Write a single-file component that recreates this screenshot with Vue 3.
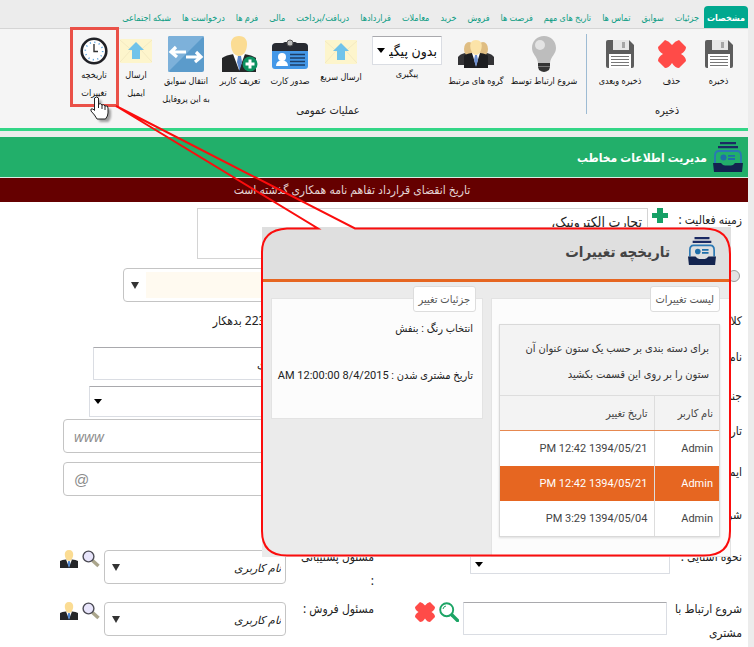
<script setup>
import { ref } from 'vue'

const tabs = ['مشخصات', 'جزئیات', 'سوابق', 'تماس ها', 'تاریخ های مهم', 'فرصت ها', 'فروش', 'خرید', 'معاملات', 'قراردادها', 'دریافت/پرداخت', 'مالی', 'فرم ها', 'درخواست ها', 'شبکه اجتماعی']
const active = ref('مشخصات')

const saveTools = [
  { icon: 'disk', label: 'ذخیره', size: 'w47' },
  { icon: 'cross', label: 'حذف', size: 'w47' },
  { icon: 'disk', label: 'ذخیره وبعدی', size: 'w56' }
]
const startTools = [
  { icon: 'bulb', label: 'شروع ارتباط توسط', size: 'w76' },
  { icon: 'people', label: 'گروه های مرتبط', size: 'w60' }
]
const moreTools = [
  { icon: 'mail', label: 'ارسال سریع', size: 'w54', short: true },
  { icon: 'card', label: 'صدور کارت', size: 'w48' },
  { icon: 'useradd', label: 'تعریف کاربر', size: 'w52' },
  { icon: 'transfer', label: 'انتقال سوابق\nبه این پروفایل', size: 'w56' },
  { icon: 'mail', label: 'ارسال\nایمیل', size: 'w44', short: true },
  { icon: 'clock', label: 'تاریخچه\nتغییرات', size: 'w40', short: true }
]

const activity = ref('تجارت الکترونیک،')
const firstName = ref('علوی')
const changes = [
  { user: 'Admin', date: '1394/05/21 12:42 PM' },
  { user: 'Admin', date: '1394/05/21 12:42 PM' },
  { user: 'Admin', date: '1394/05/04 3:29 PM' }
]
const selected = ref(1)
</script>

<template>
  <div class="page" dir="rtl">
    <svg class="defs" aria-hidden="true">
      <symbol id="disk" viewBox="0 0 28 28">
        <path d="M0 2Q0 0 2 0H23L28 5V26Q28 28 26 28H2Q0 28 0 26Z" fill="#5d5d5d" />
        <rect x="7" y="0" width="16" height="10" fill="#e6e6e6" /><rect x="16" y="2" width="3" height="6" fill="#a5a5a5" />
        <rect x="3" y="14" width="22" height="14" fill="#fff" />
        <path d="M5 16.500H23M5 19.500H23M5 22.500H23M5 25.500H23" stroke="#777" stroke-width="1.200" />
      </symbol>
      <symbol id="cross" viewBox="0 0 28 28">
        <path d="M0 7L7 0Q11 1 14 5Q17 1 21 0L28 7Q28 11 23 14Q28 17 28 21L21 28Q17 28 14 23Q11 28 7 28L0 21Q0 17 5 14Q0 11 0 7Z" fill="#ff4b48" />
      </symbol>
      <symbol id="bulb" viewBox="0 0 24 36">
        <path d="M12 0C5 0 0 5 0 12C0 18 5 20 6 27H18C19 20 24 18 24 12C24 5 19 0 12 0Z" fill="#bdbdbd" />
        <circle cx="8" cy="9" r="5" fill="#e3e3e3" />
        <path d="M6 27H18V31L17 34Q14 36 12 36Q10 36 7 34L6 31Z" fill="#333" /><path d="M6 30.500H18" stroke="#777" />
      </symbol>
      <symbol id="man" viewBox="0 0 18 18">
        <path d="M0 18V11Q2 9.500 6 9.500H12Q16 9.500 18 11V18Z" fill="#252628" />
        <path d="M6 9.500L9 17L12 9.500Z" fill="#fff" /><path d="M8.200 11H9.800L10.300 14L9 18L7.700 14Z" fill="#4f86cf" />
        <path d="M9 0C6 0 4.500 2 4.800 5C5 8 7 11 9 11C11 11 13 8 13.200 5C13.500 2 12 0 9 0Z" fill="#fbdc93" />
      </symbol>
      <symbol id="people" viewBox="0 0 36 28">
        <path d="M0 25V17Q2 14 7 13H29Q34 14 36 17V25Z" fill="#333336" />
        <ellipse cx="11" cy="9" rx="5" ry="7" fill="#dfbd82" /><ellipse cx="25" cy="9" rx="5" ry="7" fill="#dfbd82" />
        <path d="M6 28V16Q7 14 14 13H22Q29 14 30 16V28Z" fill="#1d1e21" />
        <path d="M14 13L18 26L22 13Z" fill="#fff" /><path d="M17 15H19L20 20L18 27L16 20Z" fill="#6d8fd0" />
        <path d="M18 0C13.500 0 12 3 12.300 7C12.800 12 15.500 15 18 15C20.500 15 23.200 12 23.700 7C24 3 22.500 0 18 0Z" fill="#fbe3a8" />
      </symbol>
      <symbol id="mail" viewBox="0 0 32 24">
        <rect width="32" height="24" rx="1" fill="#fdf5cc" /><path d="M0 1L16 15L32 1M0 23L11 11M32 23L21 11" fill="none" stroke="#f3e9c0" />
        <path d="M16 3L24 11H20V20H12V11H8Z" fill="#70c3ea" />
      </symbol>
      <symbol id="card" viewBox="0 0 36 30">
        <rect y="5" width="36" height="25" rx="3" fill="#4498e8" /><path d="M0 12V8Q0 4 4 4H32Q36 4 36 8V12Z" fill="#282a31" />
        <rect x="11" y="3" width="14" height="4" rx="2" fill="#282a31" /><circle cx="18" cy="4" r="3" fill="#bbb" stroke="#555" />
        <circle cx="10" cy="18" r="4" fill="#fff" /><path d="M4 27Q4 22 10 21Q16 22 16 27Z" fill="#fff" />
        <path d="M18 15.500H33M18 19H33M18 22.500H33M18 26H33" stroke="#1d3d66" stroke-width="1.400" />
      </symbol>
      <symbol id="useradd" viewBox="0 0 36 36">
        <path d="M0 36V22Q4 19 12 18H22Q30 19 34 22V36Z" fill="#252628" />
        <path d="M11 18L17 34L23 18Z" fill="#fff" /><path d="M16 20H19L20 26L17.500 35L15 26Z" fill="#5b86cb" />
        <path d="M17 0C11 0 8.500 4 9 9C9.500 16 13 20 17 20C21 20 24.500 16 25 9C25.500 4 23 0 17 0Z" fill="#fbdc93" />
        <circle cx="28" cy="28" r="7.500" fill="#0b9160" /><path d="M28 23.500V32.500M23.500 28H32.500" stroke="#fff" stroke-width="3" />
      </symbol>
      <symbol id="transfer" viewBox="0 0 36 36">
        <rect width="36" height="36" rx="2" fill="#5b9bcb" /><path d="M0 2Q0 0 2 0H36L0 36Z" fill="#7db1da" />
        <path d="M8 11L3 16L9 21M3.500 16H18M28 16L33 21L27 26M33 21H18" fill="none" stroke="#fff" stroke-width="3.200" />
      </symbol>
      <symbol id="clock" viewBox="0 0 28 28">
        <circle cx="14" cy="14" r="12.300" fill="#fff" stroke="#202126" stroke-width="2.600" />
        <circle cx="14" cy="14" r="8.700" fill="none" stroke="#5ea5e0" stroke-width="1.600" stroke-dasharray="1.200 3.355" />
        <path d="M14 7V14.500H18" fill="none" stroke="#333" stroke-width="1.400" />
      </symbol>
      <symbol id="files" viewBox="0 0 30 30">
        <path d="M7 1.200H23M5 5.200H25" stroke="#1b2a63" stroke-width="2.200" />
        <path d="M2 21V14Q2 9 6 9H24Q28 9 28 14V21" fill="none" stroke="#2a78b4" stroke-width="1.800" />
        <circle cx="10.500" cy="15.500" r="3" fill="#1f6fa9" /><path d="M15 13.800H22M15 17H22" stroke="#1f6fa9" stroke-width="1.800" />
        <path d="M0 21H8Q10 23.500 12 23.500H18Q20 23.500 22 21H30L29 30H1Z" fill="#13244f" />
      </symbol>
      <symbol id="plus" viewBox="0 0 16 16"><path d="M5 0H11V5H16V10H11V15H5V10H0V5H5Z" fill="#16a066" /></symbol>
      <symbol id="lens" viewBox="0 0 18 18">
        <path d="M10.500 10.500L16.500 16" stroke="#aaa58c" stroke-width="3.500" /><circle cx="6.500" cy="6.500" r="5.400" fill="#e8e5fb" stroke="#4c4b55" stroke-width="1.400" />
      </symbol>
      <symbol id="search" viewBox="0 0 20 20">
        <path d="M13 13L18.500 18.500" stroke="#1ca465" stroke-width="3.400" stroke-linecap="round" />
        <circle cx="7.700" cy="7.700" r="6.500" fill="#fff" stroke="#1ca465" stroke-width="1.900" /><path d="M4 7Q4.500 4.300 7 4" fill="none" stroke="#1ca465" />
      </symbol>
    </svg>

    <nav class="tabs">
      <a v-for="t in tabs" :key="t" href="#" :class="{ on: t === active }" @click.prevent="active = t">{{ t }}</a>
    </nav>

    <header class="ribbon">
      <section class="group">
        <div class="tools">
          <button v-for="t in saveTools" :key="t.label" type="button" class="tool" :class="t.size">
            <span class="pic"><svg :class="t.icon"><use :href="'#' + t.icon" /></svg></span><span>{{ t.label }}</span>
          </button>
        </div>
        <h2>ذخیره</h2>
      </section>
      <section class="group main">
        <div class="tools">
          <button v-for="t in startTools" :key="t.label" type="button" class="tool" :class="t.size">
            <span class="pic"><svg :class="t.icon"><use :href="'#' + t.icon" /></svg></span><span>{{ t.label }}</span>
          </button>
          <div class="tool follow">
            <span class="pick"><select id="follow"><option>بدون پیگیری</option></select></span>
            <label for="follow">پیگیری</label>
          </div>
          <button v-for="t in moreTools" :key="t.label" type="button" class="tool" :class="[t.size, { short: t.short }]">
            <span class="pic"><svg :class="t.icon"><use :href="'#' + t.icon" /></svg></span><span>{{ t.label }}</span>
          </button>
        </div>
        <h2>عملیات عمومی</h2>
      </section>
    </header>

    <main>
      <div class="title"><svg class="files"><use href="#files" /></svg><h1>مدیریت اطلاعات مخاطب</h1></div>
      <p class="alert">تاریخ انقضای قرارداد تفاهم نامه همکاری گذشته است</p>

      <form class="form" @submit.prevent>
        <div class="row activity">
          <label for="activity">زمینه فعالیت :</label>
          <button type="button" class="ico" aria-label="افزودن"><svg class="plus"><use href="#plus" /></svg></button>
          <textarea id="activity" v-model="activity"></textarea>
        </div>

        <div class="row"><input type="radio" class="radio" aria-label="نوع"></div>
        <div class="row left">
          <span class="combo cream"><input aria-label="گروه"><button type="button" aria-label="باز کردن"></button></span>
        </div>

        <div class="row"><span class="lab">کلاس</span></div>
        <div class="row left"><span class="lab">223000 بدهکار</span></div>

        <div class="row"><span class="lab">نام</span></div>
        <div class="row left"><input v-model="firstName" class="box name" aria-label="نام"></div>

        <div class="row"><span class="lab">جنسیت</span></div>
        <div class="row left"><span class="pick wide"><select aria-label="جنسیت"><option></option></select></span></div>

        <div class="row"><span class="lab">تاریخ</span></div>
        <div class="row left"><input class="soft web" dir="ltr" placeholder="www" aria-label="وب"></div>

        <div class="row"><span class="lab">ایمیل</span></div>
        <div class="row left"><input class="soft" dir="ltr" placeholder="@" aria-label="ایمیل"></div>

        <div class="row"><span class="lab">شرکت</span></div>
        <div class="row left"></div>

        <div class="row">
          <label class="lab cap" for="how">نحوه آشنایی :</label>
          <span class="pick how"><select id="how"><option></option></select></span>
        </div>
        <div class="row left named">
          <label class="lab cap" for="support">{{ 'مسئول پشتیبانی\n:' }}</label>
          <span class="combo user"><input id="support" placeholder="نام کاربری"><button type="button" aria-label="باز کردن"></button></span>
          <button type="button" class="ico" aria-label="جستجو"><svg class="s18"><use href="#lens" /></svg></button>
          <button type="button" class="ico" aria-label="کاربر"><svg class="s18"><use href="#man" /></svg></button>
        </div>

        <div class="row">
          <label class="lab cap" for="start">{{ 'شروع ارتباط با\nمشتری' }}</label>
          <input id="start" class="box start">
          <button type="button" class="ico" aria-label="جستجو"><svg class="s20"><use href="#search" /></svg></button>
          <button type="button" class="ico" aria-label="حذف"><svg class="s20"><use href="#cross" /></svg></button>
        </div>
        <div class="row left named">
          <label class="lab cap" for="sales">مسئول فروش :</label>
          <span class="combo user"><input id="sales" placeholder="نام کاربری"><button type="button" aria-label="باز کردن"></button></span>
          <button type="button" class="ico" aria-label="جستجو"><svg class="s18"><use href="#lens" /></svg></button>
          <button type="button" class="ico" aria-label="کاربر"><svg class="s18"><use href="#man" /></svg></button>
        </div>
      </form>
    </main>

    <aside class="popup">
      <div class="pop-title"><svg class="files"><use href="#files" /></svg><h2>تاریخچه تغییرات</h2></div>
      <div class="pop-body">
        <section class="card list">
          <h3>لیست تغییرات</h3>
          <div class="grid">
            <p>برای دسته بندی بر حسب یک ستون عنوان آن ستون را بر روی این قسمت بکشید</p>
            <table>
              <thead><tr><th>نام کاربر</th><th>تاریخ تغییر</th></tr></thead>
              <tbody>
                <tr v-for="(c, i) in changes" :key="i" :class="{ sel: i === selected }" @click="selected = i">
                  <td>{{ c.user }}</td><td>{{ c.date }}</td>
                </tr>
              </tbody>
            </table>
          </div>
        </section>
        <section class="card detail">
          <h3>جزئیات تغییر</h3>
          <p>انتخاب رنگ : بنفش</p>
          <p>تاریخ مشتری شدن : 8/4/2015 12:00:00 AM</p>
        </section>
      </div>
    </aside>

    <svg class="callout" viewBox="0 0 754 647" aria-hidden="true">
      <rect x="71.500" y="28.500" width="46" height="77" fill="none" stroke="#ea5148" stroke-width="3" />
      <path d="M116 106L318 228.500H287Q262 230 262 252V531Q262 555.500 287 555.500H704Q730 555.500 730 531V254Q730 228.500 704 228.500H355Z" fill="none" stroke="#fb0d0d" stroke-width="2" />
      <path class="shade" d="M94.500 98Q96.500 96 98.500 98V104Q101 103 102 105Q104 104 105 106Q108 105 108 108V113Q108 116 105.500 119H97Q95 115 91 111Q90 108 93 109L94.500 110.500Z" />
      <path d="M94.500 98Q96.500 96 98.500 98V104Q101 103 102 105Q104 104 105 106Q108 105 108 108V113Q108 116 105.500 119H97Q95 115 91 111Q90 108 93 109L94.500 110.500Z" fill="#fff" stroke="#222" />
      <path d="M98.500 104V108M102 105V109M105 106V110" stroke="#222" />
    </svg>
  </div>
</template>

<style>
body { margin: 0; background: #ececec; }
</style>

<style scoped>
.page { position: relative; min-height: 100vh; padding-right: 6px; background: #ececec; overflow: hidden; font-family: "Noto Sans", "DejaVu Sans Condensed", "DejaVu Sans", sans-serif; font-size: 12px; color: #222; }
.page, .page * { box-sizing: border-box; }
.defs { position: absolute; width: 0; height: 0; }
button, input, select, textarea { font: inherit; color: inherit; margin: 0; }
button { border: 0; padding: 0; background: none; }
h1, h2, h3, p { margin: 0; font-weight: normal; }
svg { display: block; }

.tabs { display: flex; gap: 11px; height: 28px; padding: 6px 0 0; font-size: 9px; }
.tabs a { line-height: 24px; height: 22px; color: #0b9c83; text-decoration: none; white-space: nowrap; }
.tabs .on { width: 44px; margin-left: -6px; text-align: center; color: #fff; background: #00a88f; border-radius: 4px 4px 0 0; font-weight: bold; }

.ribbon { display: flex; height: 103px; padding: 5px 6px 0 0; background: #f5f5f5; border-top: 1px solid #d5d5d5; border-bottom: 3px solid #33d687; }
.group h2 { text-align: center; font-size: 11px; line-height: 16px; }
.group.main { border-right: 1px solid #9dbbd3; height: 80px; margin-right: 5px; padding-right: 4px; }
.tools { display: flex; height: 68px; }
.tool { display: flex; flex-direction: column; align-items: center; font-size: 9px; line-height: 18px; white-space: pre; color: #111; padding-top: 2px; }
.pic { height: 36px; display: flex; align-items: center; }
.short .pic { height: 32px; }
.w40 { width: 40px; } .w44 { width: 44px; } .w47 { width: 47px; } .w48 { width: 48px; } .w52 { width: 52px; } .w54 { width: 54px; } .w56 { width: 56px; } .w60 { width: 60px; } .w76 { width: 76px; }
.disk, .cross, .clock { width: 28px; height: 28px; }
.bulb { width: 24px; height: 36px; }
.people { width: 36px; height: 28px; }
.mail { width: 32px; height: 24px; }
svg.card { width: 36px; height: 30px; }
.useradd, .transfer { width: 36px; height: 36px; }
.follow { width: 78px; }
.follow .pick { width: 70px; height: 29px; }
.follow .pick select { font-size: 14px; padding: 0 4px 0 16px; }

.pick { position: relative; display: block; }
.pick select { appearance: none; width: 100%; height: 100%; border: 1px solid #dadde3; border-top-color: #a9a9ad; border-radius: 1px; background: #fff; padding: 0 4px; }
.pick::after { content: ""; position: absolute; left: 5px; top: 12px; border: 4px solid transparent; border-top: 5px solid #000; border-bottom: 0; }

main { margin-top: 6px; background: #fff; }
.title { display: flex; align-items: center; gap: 6px; height: 41px; padding: 0 5px; background: #22af6a; border-bottom: 1px solid #d9efe4; color: #fff; }
.title h1 { font-size: 12px; font-weight: bold; }
.files { width: 30px; height: 30px; }
.alert { height: 24px; padding-right: 44px; background: #650000; color: #e4d4d4; text-align: center; line-height: 24px; }

.form { display: grid; grid-template-columns: 1fr 1fr; grid-template-rows: 61px 43px 36px 39px 35px 41px 43px 45px 52px 50px; padding: 0 6px; }
.row { display: flex; align-items: flex-start; padding-top: 5px; }
.left { padding-right: 88px; }
.named { padding-right: 0; }
.activity { grid-column: 1 / -1; padding: 6px 0 0 191px; gap: 4px; }
.activity label { width: 70px; line-height: 24px; white-space: nowrap; }
.activity textarea { flex: 1; height: 51px; resize: none; border: 1px solid #d4d4d4; padding: 3px 5px; font-size: 14px; outline: 0; overflow: hidden; }
.plus { width: 16px; height: 16px; }
.ico { line-height: 0; }
.radio { appearance: none; width: 12px; height: 12px; margin: 2px; border: 1px solid #999; border-radius: 50%; background: #e2e2e2; }
.lab { line-height: 20px; }
.cap { line-height: 24px; width: 88px; flex: none; white-space: pre; margin-top: -5px; }
.row .cap + .how { width: 200px; height: 32px; margin-right: -16px; margin-top: -8px; }
.how::after { top: 20px; }
.combo { display: flex; width: 163px; height: 34px; border: 1px solid #c4c4c4; border-radius: 4px; background: #fff; padding: 3px 0; }
.combo input { flex: 1; min-width: 0; border: 0; outline: 0; background: transparent; padding: 0 4px; font-size: 11px; }
.combo button { width: 22px; display: flex; justify-content: center; align-items: center; }
.combo button::after { content: ""; border: 4px solid transparent; border-top: 7px solid #333; border-bottom: 0; }
.cream input { background: #fffaf0; }
.user { width: 182px; margin-left: 4px; }
.user input { font-style: italic; }
.user input::placeholder { color: #222; opacity: 1; }
.named .ico { margin-left: 4px; }
.box { border: 1px solid #dadde3; border-top-color: #a9a9ad; border-radius: 1px; height: 33px; background: #fff; padding: 0 4px; }
.name { width: 193px; }
.wide { width: 197px; height: 31px; }
.wide::after { top: 13px; }
.soft { width: 223px; height: 34px; border: 1px solid #c4c4c4; border-radius: 4px; padding: 0 10px; font-family: "Liberation Sans", Arial, sans-serif; font-size: 15px; }
.web { margin-top: -2px; font-style: italic; font-size: 14px; font-family: "Open Sans", sans-serif; }
.soft::placeholder { color: #8b8b8b; opacity: 1; }
.s18 { width: 18px; height: 18px; }
.s20 { width: 20px; height: 20px; margin-right: 4px; }
.row .cap + .start { width: 204px; margin-right: -13px; }

.popup { position: absolute; right: 23px; top: 227px; width: 469px; background: #ebebeb; }
.pop-title { display: flex; align-items: center; gap: 18px; height: 55px; padding: 0 15px 4px; background: #dfdfdf; border-bottom: 3px solid #e66621; }
.pop-title .files { width: 28px; height: 28px; }
.pop-title h2 { font-size: 15px; font-weight: bold; color: #444; }
.pop-body { display: flex; gap: 8px; align-items: flex-start; padding-top: 16px; }
section.card { background: #fcfcfc; border: 1px solid #e3e3e3; }
.list { width: 240px; height: 259px; padding: 0 10px 0 7px; }
.detail { width: 212px; height: 121px; padding: 0 9px; }
.card h3 { width: max-content; height: 26px; margin-top: -13px; padding: 0 5px; line-height: 24px; border: 1px solid #ddd; border-radius: 3px; background: #fff; font-size: 11px; color: #555; }
.detail h3 { margin-right: -3px; }
.detail p { line-height: 24px; margin-top: 5px; font-family: Roboto, "DejaVu Sans Condensed", "DejaVu Sans", sans-serif; font-size: 11px; white-space: nowrap; }
.detail p + p { margin-top: 23px; }
.grid { margin-top: 12px; border: 1px solid #d9d9d9; background: #f3f3f3; box-shadow: 0 1px 2px #ddd; }
.grid p { height: 70px; padding: 10px 10px 0 16px; line-height: 26px; font-size: 11px; color: #333; }
table { width: 100%; border-collapse: collapse; table-layout: fixed; font-family: Roboto, "DejaVu Sans Condensed", "DejaVu Sans", sans-serif; font-size: 11px; color: #444; background: #fff; }
th, td { height: 35px; padding: 0 6px; text-align: right; font-weight: normal; border-left: 1px solid #ddd; }
th { background: #f3f3f3; border-top: 1px solid #ddd; border-bottom: 1px solid #e68850; }
th:first-child { width: 65px; }
th:last-child, td:last-child { border-left: 0; }
.sel td { background: #e66621; color: #fff; }
.callout { position: absolute; right: 0; top: 0; width: 754px; height: 647px; pointer-events: none; }
.shade { transform: translate(3px, 3px); fill: #000; opacity: .35; filter: blur(1px); }
</style>
